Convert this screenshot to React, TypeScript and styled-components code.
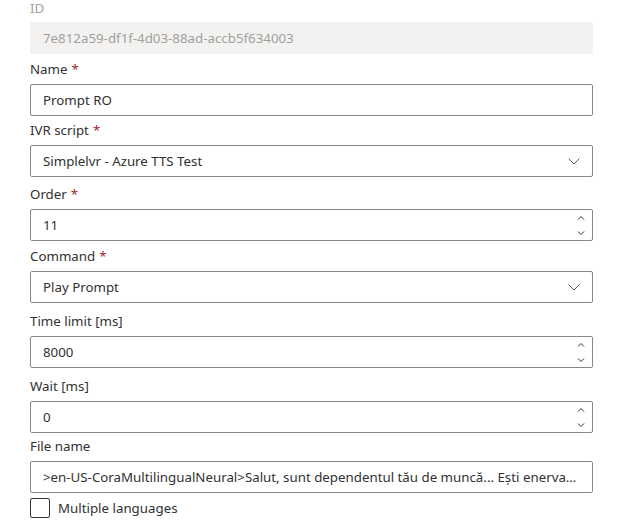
import { FC, ReactNode } from 'react'
import styled, { createGlobalStyle } from 'styled-components'

const GlobalStyle = createGlobalStyle`
  html, body {
    margin: 0;
    padding: 0;
    background: #ffffff;
  }
  body {
    font-family: 'Noto Sans', 'Open Sans', sans-serif;
    -webkit-font-smoothing: antialiased;
  }
`

interface IField {
  label: string
  required?: boolean
  disabled?: boolean
  offset?: number
  children: ReactNode
}

const Field: FC<IField> = ({ label, required, disabled, offset = 0, children }) => (
  <FieldWrapper $offset={offset}>
    <Label $disabled={disabled}>
      {label}
      {required && <Required>*</Required>}
    </Label>
    {children}
  </FieldWrapper>
)

const ChevronDown = () => (
  <svg width="12" height="12" viewBox="0 0 12 12" fill="none">
    <path d="M0.5 3.5L6 9L11.5 3.5" stroke="#605e5c" strokeWidth="1" />
  </svg>
)

const Spinner = () => (
  <SpinWrapper>
    <SpinButton>
      <svg width="8" height="6" viewBox="0 0 8 6" fill="none">
        <path d="M1 4.5L4 1.5L7 4.5" stroke="#323130" strokeWidth="1" />
      </svg>
    </SpinButton>
    <SpinButton>
      <svg width="8" height="6" viewBox="0 0 8 6" fill="none">
        <path d="M1 1.5L4 4.5L7 1.5" stroke="#323130" strokeWidth="1" />
      </svg>
    </SpinButton>
  </SpinWrapper>
)

const App: FC = () => {
  return (
    <>
      <GlobalStyle />
      <FormWrapper>
        <FieldWrapper $offset={0}>
          <TopLabel>ID</TopLabel>
          <ReadOnlyBox>7e812a59-df1f-4d03-88ad-accb5f634003</ReadOnlyBox>
        </FieldWrapper>

        <Field label="Name" required>
          <InputBox>
            <TextInput readOnly value="Prompt RO" />
          </InputBox>
        </Field>

        <Field label="IVR script" required offset={-1}>
          <DropdownBox>
            <span>Simplelvr - Azure TTS Test</span>
            <ChevronDown />
          </DropdownBox>
        </Field>

        <Field label="Order" required offset={2}>
          <InputBox>
            <TextInput readOnly value="11" />
            <Spinner />
          </InputBox>
        </Field>

        <Field label="Command" required>
          <DropdownBox>
            <span>Play Prompt</span>
            <ChevronDown />
          </DropdownBox>
        </Field>

        <Field label="Time limit [ms]" offset={3}>
          <InputBox>
            <TextInput readOnly value="8000" />
            <Spinner />
          </InputBox>
        </Field>

        <Field label="Wait [ms]" offset={3}>
          <InputBox>
            <TextInput readOnly value="0" />
            <Spinner />
          </InputBox>
        </Field>

        <Field label="File name" offset={-2}>
          <InputBox>
            <TextInput
              readOnly
              value=">en-US-CoraMultilingualNeural>Salut, sunt dependentul tău de muncă... Ești enervat..."
            />
          </InputBox>
        </Field>

        <CheckRow>
          <CheckBox />
          <span>Multiple languages</span>
        </CheckRow>
      </FormWrapper>
    </>
  )
}

export default App

const FormWrapper = styled.div`
  display: flex;
  flex-direction: column;
  width: 563px;
  margin: 0 0 0 30px;
  color: #323130;
  font-size: 13.3px;
`
const FieldWrapper = styled.div<{ $offset: number }>`
  display: flex;
  flex-direction: column;
  margin-top: ${({ $offset }) => $offset}px;
`
const TopLabel = styled.label`
  display: block;
  padding: 0 0 6px;
  line-height: 16px;
  color: #a19f9d;
`
const Label = styled.label<{ $disabled?: boolean }>`
  display: block;
  padding: 5px 0;
  line-height: 20px;
  color: ${({ $disabled }) => ($disabled ? '#a19f9d' : '#323130')};
`
const Required = styled.span`
  color: #a4262c;
  padding-left: 4px;
`
const ReadOnlyBox = styled.div`
  height: 32px;
  box-sizing: border-box;
  padding: 0 13px;
  display: flex;
  align-items: center;
  background: #f3f2f1;
  color: #a19f9d;
`
const InputBox = styled.div`
  height: 32px;
  box-sizing: border-box;
  border: 1px solid #8a8886;
  border-radius: 2px;
  display: flex;
  align-items: stretch;
  background: #ffffff;
`
const TextInput = styled.input`
  flex: 1;
  min-width: 0;
  border: none;
  outline: none;
  background: none;
  padding: 0 12px;
  font: inherit;
  color: #323130;
  text-overflow: ellipsis;
`
const DropdownBox = styled.div`
  height: 32px;
  box-sizing: border-box;
  border: 1px solid #8a8886;
  border-radius: 2px;
  display: flex;
  align-items: center;
  justify-content: space-between;
  padding: 0 12px;
  span {
    white-space: nowrap;
  }
`
const SpinWrapper = styled.div`
  display: flex;
  flex-direction: column;
  width: 23px;
`
const SpinButton = styled.div`
  flex: 1;
  display: flex;
  align-items: center;
  justify-content: center;
`
const CheckRow = styled.div`
  display: flex;
  align-items: center;
  gap: 8px;
  margin-top: 5px;
`
const CheckBox = styled.div`
  width: 20px;
  height: 20px;
  box-sizing: border-box;
  border: 1px solid #323130;
  border-radius: 2px;
`
